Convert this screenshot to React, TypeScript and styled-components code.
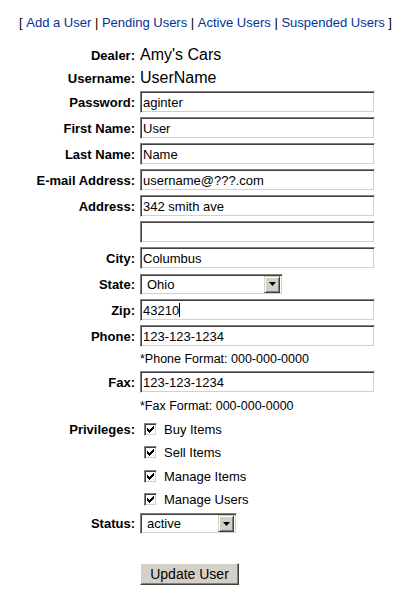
import React from "react";
import styled, { createGlobalStyle } from "styled-components";

const Global = createGlobalStyle`
  html, body { margin: 0; padding: 0; background: #ffffff; }
  body { font-family: "Liberation Sans", Arial, sans-serif; color: #000; }
`;

const Page = styled.div`
  width: 411px;
  padding-top: 12px;
`;

const Nav = styled.nav`
  height: 20px;
  display: flex;
  align-items: center;
  justify-content: center;
  font-size: 13px;
  white-space: pre;
  margin-bottom: 11px;
`;

const NavLink = styled.a`
  color: #003399;
  text-decoration: none;
`;

const Form = styled.div`
  display: flex;
  flex-direction: column;
`;

const Row = styled.div<{ $h: number }>`
  display: grid;
  grid-template-columns: 135px 1fr;
  column-gap: 5px;
  align-items: center;
  height: ${(p) => p.$h}px;
`;

const Label = styled.div`
  text-align: right;
  font-weight: bold;
  font-size: 13px;
`;

const Value = styled.div`
  font-size: 16px;
`;

const Note = styled.div`
  font-size: 12.5px;
`;

const FieldWrap = styled.div`
  position: relative;
  width: 235px;
  height: 22px;
`;

const TextInput = styled.input`
  box-sizing: border-box;
  width: 235px;
  height: 22px;
  margin: 0;
  padding: 0 2px;
  font-family: "Liberation Sans", Arial, sans-serif;
  font-size: 13px;
  color: #000;
  background: #fff;
  border-style: solid;
  border-width: 1px;
  border-color: #808080 #ffffff #ffffff #808080;
  box-shadow: inset 1px 1px 0 #404040, inset -1px -1px 0 #d4d0c8;
  outline: none;
`;

const Caret = styled.span<{ $left: number }>`
  position: absolute;
  top: 4px;
  left: ${(p) => p.$left}px;
  width: 1px;
  height: 14px;
  background: #000;
`;

const SelectBox = styled.div<{ $w: number }>`
  box-sizing: border-box;
  width: ${(p) => p.$w}px;
  height: 21px;
  display: flex;
  align-items: center;
  justify-content: space-between;
  background: #fff;
  border-style: solid;
  border-width: 1px;
  border-color: #808080 #ffffff #ffffff #808080;
  box-shadow: inset 1px 1px 0 #404040, inset -1px -1px 0 #d4d0c8;
  padding: 2px;
  font-size: 13px;
`;

const SelectText = styled.span`
  padding-left: 4px;
`;

const ArrowButton = styled.span`
  box-sizing: border-box;
  width: 16px;
  height: 17px;
  display: flex;
  align-items: center;
  justify-content: center;
  background: #d4d0c8;
  border-style: solid;
  border-width: 1px;
  border-color: #d4d0c8 #404040 #404040 #d4d0c8;
  box-shadow: inset 1px 1px 0 #ffffff, inset -1px -1px 0 #808080;
`;

const CheckList = styled.div`
  display: flex;
  align-items: center;
  gap: 7px;
  padding-left: 4px;
  font-size: 13px;
`;

const CheckBox = styled.span`
  box-sizing: border-box;
  width: 13px;
  height: 13px;
  display: flex;
  align-items: center;
  justify-content: center;
  background: #fff;
  border-style: solid;
  border-width: 1px;
  border-color: #808080 #ffffff #ffffff #808080;
  box-shadow: inset 1px 1px 0 #404040, inset -1px -1px 0 #d4d0c8;
`;

const Button = styled.button`
  box-sizing: border-box;
  width: 99px;
  height: 22px;
  margin: 0;
  padding: 0;
  font-family: "Liberation Sans", Arial, sans-serif;
  font-size: 14px;
  color: #000;
  background: #d4d0c8;
  border-style: solid;
  border-width: 1px;
  border-color: #ffffff #404040 #404040 #ffffff;
  box-shadow: inset -1px -1px 0 #808080;
`;

const Arrow = () => (
  <svg width="7" height="4" viewBox="0 0 7 4">
    <path d="M0 0h7L3.5 4z" fill="#000" />
  </svg>
);

const Check = () => (
  <svg width="7" height="7" viewBox="0 0 7 7" shapeRendering="crispEdges">
    <path
      d="M0 2h1v3H0zM1 3h1v3H1zM2 4h1v3H2zM3 3h1v3H3zM4 2h1v3H4zM5 1h1v3H5zM6 0h1v3H6z"
      fill="#000"
    />
  </svg>
);

const Select = ({ w, value }: { w: number; value: string }) => (
  <SelectBox $w={w}>
    <SelectText>{value}</SelectText>
    <ArrowButton>
      <Arrow />
    </ArrowButton>
  </SelectBox>
);

const inputRows: { label: string; value: string }[] = [
  { label: "Password:", value: "aginter" },
  { label: "First Name:", value: "User" },
  { label: "Last Name:", value: "Name" },
  { label: "E-mail Address:", value: "username@???.com" },
  { label: "Address:", value: "342 smith ave" },
  { label: "", value: "" },
  { label: "City:", value: "Columbus" },
];

const privileges: { label: string; h: number }[] = [
  { label: "Buy Items", h: 24 },
  { label: "Sell Items", h: 23 },
  { label: "Manage Items", h: 24 },
  { label: "Manage Users", h: 23 },
];

export default function App() {
  return (
    <Page>
      <Global />
      <Nav>
        {"[ "}
        <NavLink href="#">Add a User</NavLink>
        {" | "}
        <NavLink href="#">Pending Users</NavLink>
        {" | "}
        <NavLink href="#">Active Users</NavLink>
        {" | "}
        <NavLink href="#">Suspended Users</NavLink>
        {" ]"}
      </Nav>
      <Form>
        <Row $h={24}>
          <Label>Dealer:</Label>
          <Value>Amy's Cars</Value>
        </Row>
        <Row $h={22}>
          <Label>Username:</Label>
          <Value>UserName</Value>
        </Row>
        {inputRows.map((r, i) => (
          <Row $h={26} key={i}>
            <Label>{r.label}</Label>
            <FieldWrap>
              <TextInput readOnly defaultValue={r.value} />
            </FieldWrap>
          </Row>
        ))}
        <Row $h={26}>
          <Label>State:</Label>
          <Select w={143} value="Ohio" />
        </Row>
        <Row $h={26}>
          <Label>Zip:</Label>
          <FieldWrap>
            <TextInput readOnly defaultValue="43210" />
            <Caret $left={39} />
          </FieldWrap>
        </Row>
        <Row $h={26}>
          <Label>Phone:</Label>
          <FieldWrap>
            <TextInput readOnly defaultValue="123-123-1234" />
          </FieldWrap>
        </Row>
        <Row $h={20}>
          <span />
          <Note>*Phone Format: 000-000-0000</Note>
        </Row>
        <Row $h={26}>
          <Label>Fax:</Label>
          <FieldWrap>
            <TextInput readOnly defaultValue="123-123-1234" />
          </FieldWrap>
        </Row>
        <Row $h={22}>
          <span />
          <Note>*Fax Format: 000-000-0000</Note>
        </Row>
        {privileges.map((p, i) => (
          <Row $h={p.h} key={p.label}>
            <Label>{i === 0 ? "Privileges:" : ""}</Label>
            <CheckList>
              <CheckBox>
                <Check />
              </CheckBox>
              <span>{p.label}</span>
            </CheckList>
          </Row>
        ))}
        <Row $h={25}>
          <Label>Status:</Label>
          <Select w={97} value="active" />
        </Row>
        <Row $h={25} style={{ marginTop: 25 }}>
          <span />
          <div>
            <Button type="button">Update User</Button>
          </div>
        </Row>
      </Form>
    </Page>
  );
}
